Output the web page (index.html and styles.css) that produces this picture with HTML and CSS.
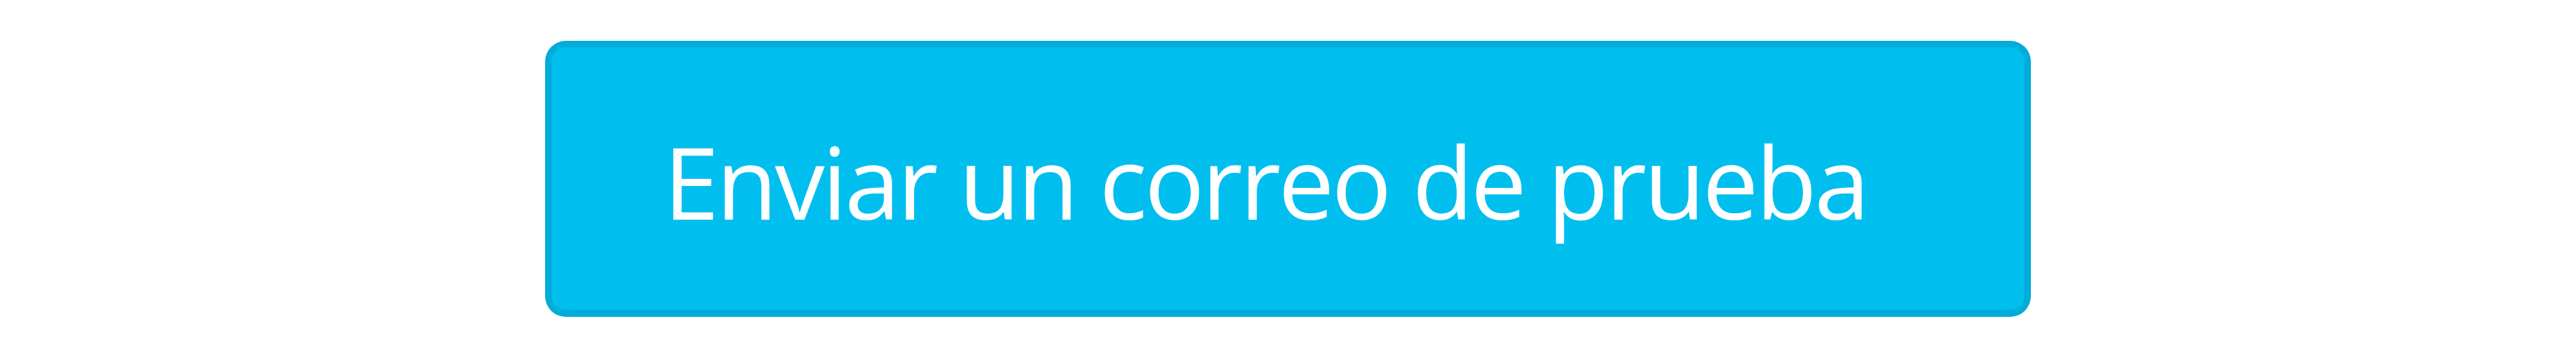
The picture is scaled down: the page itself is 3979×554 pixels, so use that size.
FILE: index.html
```html
<!DOCTYPE html>
<html lang="es">
<head>
<meta charset="utf-8">
<title>Enviar un correo de prueba</title>
<link rel="stylesheet" href="styles.css">
</head>
<body>
<div class="page">
  <button class="btn" type="button"><span class="btn-label">Enviar un correo de prueba</span></button>
</div>
</body>
</html>
```
FILE: styles.css
```css
html, body {
  margin: 0;
  padding: 0;
  background: #ffffff;
}
.page {
  display: flex;
  padding: 63px 0 0 842px;
}
.btn {
  box-sizing: border-box;
  width: 2295px;
  height: 426px;
  margin: 0;
  padding: 6px 70px 0 0;
  display: flex;
  align-items: center;
  justify-content: center;
  background: #00bfef;
  border: 10px solid #00acd9;
  border-bottom-width: 11px;
  border-radius: 32px;
  color: #ffffff;
  font-family: "Open Sans", "Noto Sans", sans-serif;
  cursor: pointer;
}
.btn-label {
  display: block;
  font-family: "Open Sans", "Noto Sans", sans-serif;
  font-size: 154px;
  font-weight: 400;
  letter-spacing: -4px;
  line-height: 1;
  color: #ffffff;
  white-space: nowrap;
}
```
